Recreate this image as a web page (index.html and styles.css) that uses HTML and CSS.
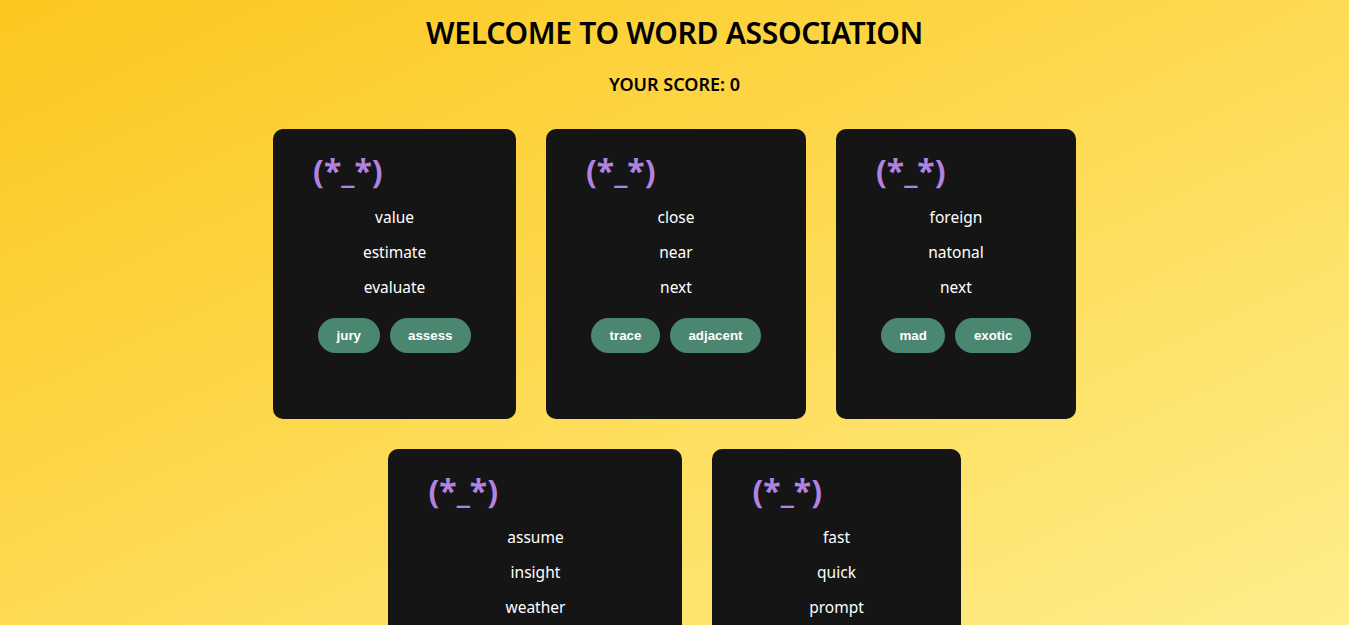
FILE: index.html
```html
<!DOCTYPE html>
<html lang="en">
<head>
<meta charset="utf-8">
<title>Word Association</title>
<link rel="stylesheet" href="styles.css">
</head>
<body>
<div class="app">
  <h1 class="title">WELCOME TO WORD ASSOCIATION</h1>
  <h3 class="score">YOUR SCORE: 0</h3>
  <div class="cards">
    <div class="card">
      <h2 class="face">(*_*)</h2>
      <p class="word">value</p>
      <p class="word">estimate</p>
      <p class="word">evaluate</p>
      <div class="options"><button class="opt">jury</button><button class="opt">assess</button></div>
    </div>
    <div class="card">
      <h2 class="face">(*_*)</h2>
      <p class="word">close</p>
      <p class="word">near</p>
      <p class="word">next</p>
      <div class="options"><button class="opt">trace</button><button class="opt">adjacent</button></div>
    </div>
    <div class="card">
      <h2 class="face">(*_*)</h2>
      <p class="word">foreign</p>
      <p class="word">natonal</p>
      <p class="word">next</p>
      <div class="options"><button class="opt">mad</button><button class="opt">exotic</button></div>
    </div>
    <div class="card">
      <h2 class="face">(*_*)</h2>
      <p class="word">assume</p>
      <p class="word">insight</p>
      <p class="word">weather</p>
      <div class="options"><button class="opt">forecast</button><button class="opt">perception</button></div>
    </div>
    <div class="card">
      <h2 class="face">(*_*)</h2>
      <p class="word">fast</p>
      <p class="word">quick</p>
      <p class="word">prompt</p>
      <div class="options"><button class="opt">rapid</button><button class="opt">urgent</button></div>
    </div>
  </div>
</div>
</body>
</html>
```
FILE: styles.css
```css
html, body {
  margin: 0;
  padding: 0;
}
body {
  min-height: 100vh;
  background: linear-gradient(155deg, #fcc71e 0%, #fdd84c 40%, #fff196 100%);
  font-family: "Noto Sans", "DejaVu Sans", sans-serif;
  color: #000;
}
.app {
  display: flex;
  flex-direction: column;
  align-items: center;
  padding-top: 14px;
}
.title {
  margin: 0;
  font-size: 30px;
  font-weight: 600;
  line-height: 38px;
  letter-spacing: -0.3px;
}
.score {
  margin: 20px 0 0;
  font-size: 18px;
  font-weight: 600;
  line-height: 24px;
}
.cards {
  margin-top: 33px;
  display: flex;
  flex-wrap: wrap;
  justify-content: center;
  gap: 30px;
  max-width: 900px;
}
.card {
  background: #151515;
  border-radius: 10px;
  padding: 23px 40px 66px;
  display: flex;
  flex-direction: column;
  color: #fff;
}
.face {
  margin: 0 0 10px;
  font-size: 32px;
  line-height: 38px;
  font-weight: 700;
  color: #b083e0;
}
.word {
  margin: 0;
  text-align: center;
  font-size: 15.5px;
  line-height: 35px;
}
.options {
  display: flex;
  justify-content: center;
  margin-top: 13px;
}
.opt {
  margin: 0 5px;
  height: 35px;
  padding: 0 18.5px;
  border: none;
  border-radius: 18px;
  background: #4a8670;
  color: #fff;
  font-family: "Liberation Sans", Arial, sans-serif;
  font-size: 13.33px;
  font-weight: 700;
}
```
